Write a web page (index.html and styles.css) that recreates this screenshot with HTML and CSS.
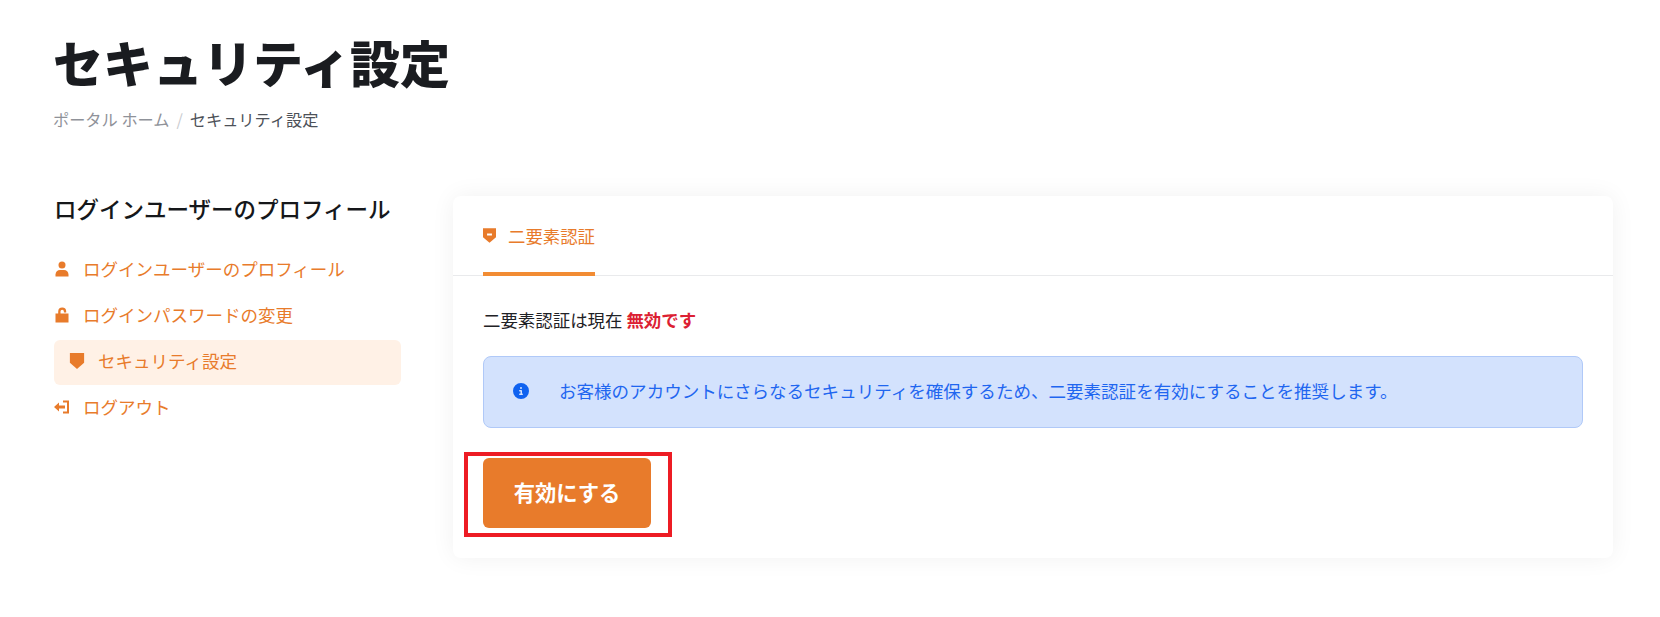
FILE: index.html
```html
<!DOCTYPE html>
<html lang="ja">
<head>
<meta charset="utf-8">
<title>セキュリティ設定</title>
<link rel="stylesheet" href="styles.css">
</head>
<body>
<main class="page">
  <header class="page-head">
    <h1 class="page-title">セキュリティ設定</h1>
    <nav class="crumbs"><a class="crumb-link">ポータル ホーム</a><span class="crumb-sep">/</span><span class="crumb-current">セキュリティ設定</span></nav>
  </header>
  <div class="columns">
    <aside class="side">
      <h2 class="side-title">ログインユーザーのプロフィール</h2>
      <ul class="side-menu">
        <li class="side-item">
          <svg class="side-icon" viewBox="-0.5 -0.5 14 16"><circle cx="6.500" cy="3.500" r="3.500"/><path d="M0 15v-2c0-2.500 2-4.500 4.500-4.500h4c2.500 0 4.500 2 4.500 4.500v2z"/></svg>
          <span>ログインユーザーのプロフィール</span>
        </li>
        <li class="side-item">
          <svg class="side-icon" viewBox="-0.5 -0.5 14 16"><path d="M0 6h2.700V4a4 4 0 0 1 8 0v1H8.400V4a1.700 1.700 0 0 0-3.400 0v2H13v9H0z"/></svg>
          <span>ログインパスワードの変更</span>
        </li>
        <li class="side-item side-item-active">
          <svg class="side-icon" viewBox="0 0 16 18"><path d="M0 0h16v11l-8 7-8-7z"/></svg>
          <span>セキュリティ設定</span>
        </li>
        <li class="side-item">
          <svg class="side-icon" viewBox="0 0 16 16"><path d="M9 1.500h6v13H9v-2h4V3.500H9zM0 8l5-4.500v3h6v3H5v3z"/></svg>
          <span>ログアウト</span>
        </li>
      </ul>
    </aside>
    <section class="card">
      <div class="tabs">
        <div class="tab">
          <svg class="tab-icon" viewBox="0 0 16 18"><path fill-rule="evenodd" d="M0 0h16v11l-8 7-8-7zM5 6.500v2.500h6V6.500z"/></svg>
          <span>二要素認証</span>
        </div>
      </div>
      <div class="card-body">
        <p class="status">二要素認証は現在 <strong class="status-off">無効です</strong></p>
        <div class="alert">
          <svg class="alert-icon" viewBox="0 0 512 512"><path d="M256 512a256 256 0 1 0 0-512 256 256 0 1 0 0 512zm-40-176h24v-64h-24c-13.300 0-24-10.700-24-24s10.700-24 24-24h48c13.300 0 24 10.700 24 24v88h8c13.300 0 24 10.700 24 24s-10.700 24-24 24h-80c-13.300 0-24-10.700-24-24s10.700-24 24-24zm40-208a32 32 0 1 1 0 64 32 32 0 1 1 0-64z"/></svg>
          <span>お客様のアカウントにさらなるセキュリティを確保するため、二要素認証を有効にすることを推奨します。</span>
        </div>
        <div class="action">
          <button class="btn" type="button">有効にする</button>
          <span class="annotation"></span>
        </div>
      </div>
    </section>
  </div>
</main>
</body>
</html>
```
FILE: styles.css
```css
* { box-sizing: border-box; }
html, body { margin: 0; padding: 0; }
body {
  background: #fff;
  color: #212529;
  font-family: "Noto Sans CJK JP", "Noto Sans", sans-serif;
  height: 617px;
  overflow: hidden;
}
.page { padding: 24px 47px 0 53px; }
.page-title {
  margin: 0;
  font-size: 50px;
  line-height: 74px;
  font-weight: 900;
  color: #1a1c20;
}
.crumbs {
  margin-top: 9px;
  display: flex;
  align-items: center;
  font-size: 16.2px;
  line-height: 24px;
}
.crumb-link { color: #8f9299; }
.crumb-sep { color: #c9cbd0; margin: 0 7px; }
.crumb-current { color: #4d5158; }
.columns { display: flex; margin-top: 64px; }
.side { width: 347px; margin: 0 52px 0 1px; flex: none; }
.side-title {
  margin: 0;
  font-size: 22.5px;
  line-height: 27px;
  font-weight: 500;
  color: #15171a;
}
.side-menu { list-style: none; margin: 24px 0 0; padding: 0; }
.side-item {
  display: flex;
  align-items: center;
  height: 45px;
  margin-bottom: 1px;
  color: #e87b2b;
  font-size: 17.5px;
}
.side-item-active {
  background: #fff1e6;
  border-radius: 6px;
  margin-top: 3px;
  margin-bottom: -1px;
  padding-left: 15px;
  padding-bottom: 4px;
}
.side-icon { width: 16px; height: 16px; fill: #e87b2b; margin-right: 13px; flex: none; }
.card {
  width: 1160px;
  height: 362px;
  margin-top: 1px;
  background: #fff;
  border-radius: 8px;
  box-shadow: 0 0 24px rgba(0, 0, 0, .06);
}
.tabs { height: 80px; border-bottom: 1px solid #e9eaec; padding-left: 30px; display: flex; }
.tab {
  height: 80px;
  display: flex;
  align-items: center;
  padding-top: 2px;
  border-bottom: 4px solid #f28c33;
  color: #e87b2b;
  font-size: 17.4px;
}
.tab-icon { width: 13px; height: 15px; fill: #e87b2b; margin-right: 12px; }
.card-body { padding: 0 30px; }
.status { margin: 31px 0 0; font-size: 17.45px; line-height: 26px; color: #1f2226; }
.status-off { color: #dc1f33; font-weight: 700; }
.alert {
  display: flex;
  align-items: center;
  margin-top: 23px;
  height: 72px;
  padding: 0 0 3px 29px;
  background: #d3e2fd;
  border: 1px solid #b0c9f8;
  border-radius: 8px;
  color: #1f66f0;
  font-size: 17.55px;
}
.alert-icon { width: 16px; height: 16px; fill: #0f62f0; margin-right: 30px; flex: none; }
.action { position: relative; margin-top: 30px; width: 168px; }
.btn {
  display: block;
  width: 168px;
  height: 70px;
  padding: 0 0 3px;
  border: 0;
  border-radius: 6px;
  background: #e87b2b;
  color: #fff;
  font: 700 21.3px "Noto Sans CJK JP", "Noto Sans", sans-serif;
}
.annotation {
  position: absolute;
  left: -19px;
  top: -6px;
  width: 208px;
  height: 85px;
  border: 4px solid #ed1c24;
}
```
